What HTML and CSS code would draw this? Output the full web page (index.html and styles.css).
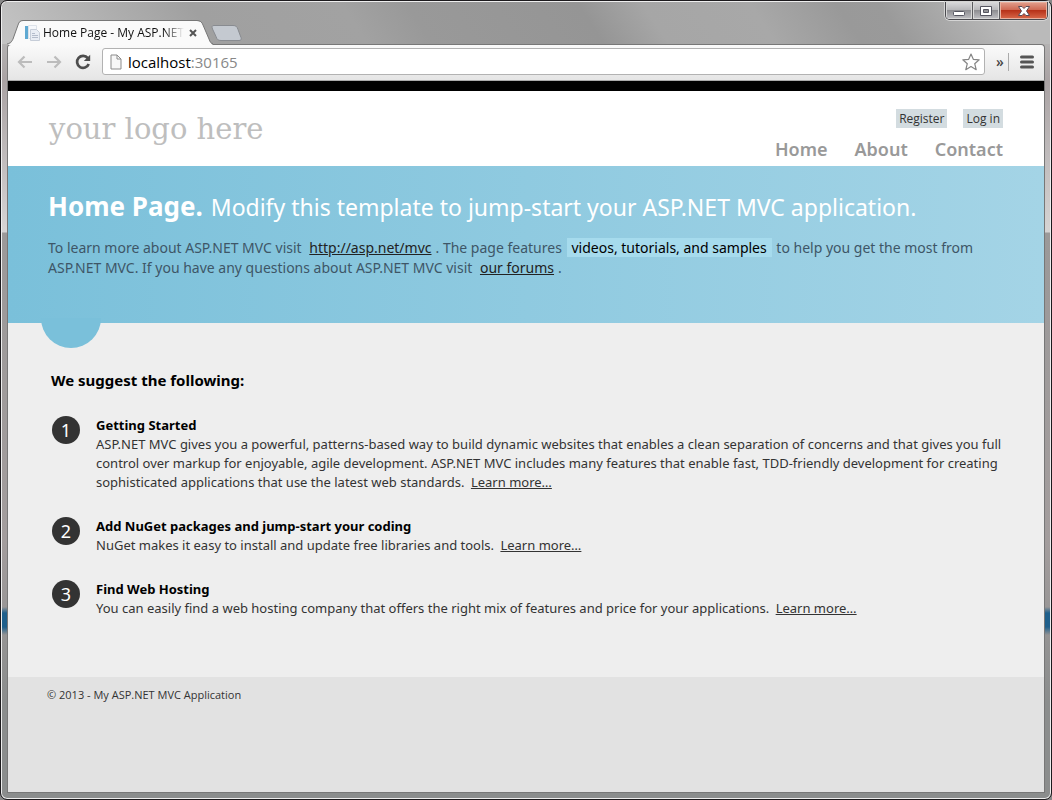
FILE: index.html
```html
<!DOCTYPE html>
<html lang="en">
<head>
<meta charset="utf-8">
<meta name="viewport" content="width=device-width, initial-scale=1">
<title>Home Page - My ASP.NET MVC Application</title>
<link rel="stylesheet" href="styles.css">
</head>
<body>
<div class="window">
  <div class="titlebar">
    <div class="tab">
      <svg class="tab-shape" viewBox="0 0 206 25" aria-hidden="true">
        <path class="tab-fill" d="M0 25 C4 24 5 22 6 19 L11 5 C12 2 13 1 16 1 H190 C193 1 195 2 196 5 L202 19 C203 22 204 24 206 25 Z"/>
        <path class="tab-line" d="M0 24 C4 23 5 21 6 19 L11 5 C12 2 13 .5 16 .5 H190 C193 .5 195 2 196 5 L202 19 C203 22 204 23.500 206 23.500"/>
      </svg>
      <svg class="favicon" viewBox="0 0 16 16" aria-hidden="true">
        <path fill="#f6f8fb" stroke="#dde2e9" d="M4.500 .5h8v13h-8z"/>
        <path fill="#5fa9d2" d="M1 1h3v13H1z"/>
        <path fill="#e9edf4" stroke="#c6cdd8" d="M6.500 4.500h6l3 3v8h-9z"/>
        <path stroke="#b4bccb" d="M8 8.500h3M8 10.500h6M8 12.500h6"/>
      </svg>
      <span class="tab-title">Home Page - My ASP.NET</span>
      <button class="tab-close" aria-label="Close tab">
        <svg viewBox="0 0 8 8"><path d="M1 1l6 6M7 1L1 7" stroke="#555" stroke-width="2"/></svg>
      </button>
    </div>
    <button class="new-tab" aria-label="New tab">
      <svg viewBox="0 0 32 16"><path d="M4 .5H23c3 0 4 1 5 4l3 8c.6 2 0 3-2 3H11c-3 0-4-1-5-4L2.500 4C1.700 1.500 2 .5 4 .5Z" fill="#c4c9d0" stroke="#888b90"/></svg>
    </button>
    <div class="controls">
      <button class="ctl" aria-label="Minimize"><svg viewBox="0 0 14 12"><rect x="1.500" y="6.500" width="11" height="4" rx="1" fill="#fff" stroke="#555560"/></svg></button>
      <button class="ctl" aria-label="Maximize"><svg viewBox="0 0 14 12"><path d="M1.500 1.500h11v9h-11zM4.500 4.500v3h5v-3z" fill="#fff" fill-rule="evenodd" stroke="#555560"/></svg></button>
      <button class="ctl ctl-close" aria-label="Close"><svg viewBox="0 0 14 12"><path d="M1.500 1.500h3.500l2 2 2-2h3.500L9.500 6l3 4.500H9l-2-2-2 2H1.500l3-4.500z" fill="#fff" stroke="#5b4a55"/></svg></button>
    </div>
  </div>

  <div class="toolbar">
    <button class="tool" aria-label="Back"><svg viewBox="0 0 16 16"><path d="M7.500 2.500L2 8l5.500 5.500M2.500 8H15" fill="none" stroke="#bcbcbc" stroke-width="2.200"/></svg></button>
    <button class="tool" aria-label="Forward"><svg viewBox="0 0 16 16"><path d="M8.500 2.500L14 8l-5.500 5.500M1 8h12.500" fill="none" stroke="#bcbcbc" stroke-width="2.200"/></svg></button>
    <button class="tool" aria-label="Reload"><svg viewBox="0 0 16 16"><path d="M12.800 4.200A6 6 0 1 0 13.700 10" fill="none" stroke="#4d4d4d" stroke-width="2.700"/><path d="M15.200.8V7H8.800z" fill="#4d4d4d"/></svg></button>
    <div class="omnibox">
      <svg class="page-icon" viewBox="0 0 12 16" aria-hidden="true"><path d="M1 1h6l4 4v10H1zM7 1v4h4" fill="#f7f7f7" stroke="#8b8b8b"/></svg>
      <div class="address" role="textbox" aria-label="Address">localhost<span class="port">:30165</span></div>
      <button class="star" aria-label="Bookmark this page"><svg viewBox="0 0 18 18"><path d="M9 1l2.300 5.300 5.900.5-4.500 3.900 1.500 6L9 13.500l-5.200 3.200 1.500-6L.8 6.800l5.900-.5z" fill="#fff" stroke="#858585" stroke-width="1.200" stroke-linejoin="round"/></svg></button>
    </div>
    <button class="more" aria-label="More extensions">»</button>
    <button class="menu" aria-label="Menu"><svg viewBox="0 0 14 14"><path d="M1.500 2h11M1.500 7h11M1.500 12h11" stroke="#555" stroke-width="3" stroke-linecap="round"/></svg></button>
  </div>

  <div class="page">
    <header class="site-header">
      <a class="logo" href="#">your logo here</a>
      <div class="header-links">
        <div class="login"><a href="#">Register</a><a href="#">Log in</a></div>
        <nav class="nav"><a href="#">Home</a><a href="#">About</a><a href="#">Contact</a></nav>
      </div>
    </header>

    <section class="featured">
      <div class="headline"><h1>Home Page.</h1> <h2>Modify this template to jump-start your ASP.NET MVC application.</h2></div>
      <p>To learn more about ASP.NET MVC visit <a href="#">http://asp.net/mvc</a>. The page features <mark>videos, tutorials, and samples</mark> to help you get the most from ASP.NET MVC. If you have any questions about ASP.NET MVC visit <a href="#">our forums</a>.</p>
    </section>

    <main class="main">
      <h3>We suggest the following:</h3>
      <ol class="steps">
        <li><h5>Getting Started</h5>ASP.NET MVC gives you a powerful, patterns-based way to build dynamic websites that enables a clean separation of concerns and that gives you full control over markup for enjoyable, agile development. ASP.NET MVC includes many features that enable fast, TDD-friendly development for creating sophisticated applications that use the latest web standards. <a href="#">Learn more…</a></li>
        <li><h5>Add NuGet packages and jump-start your coding</h5>NuGet makes it easy to install and update free libraries and tools. <a href="#">Learn more…</a></li>
        <li><h5>Find Web Hosting</h5>You can easily find a web hosting company that offers the right mix of features and price for your applications. <a href="#">Learn more…</a></li>
      </ol>
    </main>

    <footer class="footer">© 2013 - My ASP.NET MVC Application</footer>
  </div>
</div>
</body>
</html>
```
FILE: styles.css
```css
* { box-sizing: border-box; }

body {
  margin: 0;
  background: #888;
  color: #333;
  font-family: "Open Sans", "Noto Sans", sans-serif;
  font-size: 14px;
}

h1, h2, h3, h5, p { margin: 0; }

button {
  display: flex;
  align-items: center;
  justify-content: center;
  padding: 0;
  border: 0;
  background: none;
}

/* Window frame */
.window {
  display: flex;
  flex-direction: column;
  min-height: 100vh;
  padding: 0 6px 6px;
  border: 1px solid #1c1a1d;
  border-radius: 7px;
  box-shadow: inset 0 0 0 1px #eee;
  background:
    linear-gradient(transparent 606px, #1f5f8b 612px 626px, transparent 634px) 0 0 / 7px 100% no-repeat,
    linear-gradient(transparent 606px, #1f5f8b 612px 626px, transparent 634px) 100% 0 / 7px 100% no-repeat,
    linear-gradient(#b4b2b2 44px, #aaa3a4 80px, #d6d4d4 231px, #9b9999 232px, #a39d9d 540px, #8b8d8d 700px);
}

.titlebar {
  display: flex;
  align-items: flex-end;
  height: 42px;
  margin: 1px -5px 0;
  padding: 0 5px;
  border-radius: 6px 6px 0 0;
  background: linear-gradient(57deg, #c4c4c4 0%, #a0a0a0 20%, #a2a2a2 34%, #999 40%, #959595 56%, #a6a6a6 62%, #a8a8a8 72%, #999 80%, #9a9a9a 84%, #bababa 95%);
}

.tab {
  position: relative;
  display: flex;
  align-items: center;
  width: 206px;
  height: 25px;
  padding: 0 17px;
  margin-bottom: -1px;
}

.tab-shape {
  position: absolute;
  inset: 0;
  width: 100%;
  height: 100%;
}

.tab-fill { fill: #fafafa; }
.tab-line { fill: none; stroke: #777; }

.favicon {
  position: relative;
  flex: none;
  width: 16px;
  height: 16px;
}

.tab-title {
  position: relative;
  flex: 1;
  margin-left: 3px;
  color: #111;
  font-size: 12px;
  white-space: nowrap;
  -webkit-mask-image: linear-gradient(90deg, #000 86%, transparent);
  mask-image: linear-gradient(90deg, #000 86%, transparent);
}

.tab-close {
  position: relative;
  flex: none;
  width: 8px;
  height: 8px;
  margin-left: 5px;
}

.tab-close svg { width: 8px; height: 8px; }

.new-tab { margin: 0 0 3px -3px; }
.new-tab svg { width: 32px; height: 16px; }

.controls {
  display: flex;
  align-self: flex-start;
  margin: 0 -3px 0 auto;
  border: 1px solid #4a4a4f;
  border-top: 0;
  border-radius: 0 0 5px 5px;
  box-shadow: 0 0 0 1px #d5d5d5;
  overflow: hidden;
}

.ctl {
  width: 27px;
  height: 17px;
  border-right: 1px solid #5c5c60;
  background: linear-gradient(#dadadc, #b8b8bb 45%, #8e8e92 50%, #c0c0c4);
  box-shadow: inset 0 0 0 1px #d8d8d8;
}

.ctl-close {
  width: 47px;
  border: 0;
  background: linear-gradient(#e2a08e, #cf6a54 45%, #b73219 50%, #d9694a);
  box-shadow: inset 0 0 0 1px #e9b09e;
}

.ctl svg { width: 14px; height: 12px; }

/* Browser toolbar */
.toolbar {
  display: flex;
  align-items: center;
  height: 37px;
  padding: 0 10px 2px 9px;
  border: 1px solid #777;
  border-bottom-color: #aaa;
  border-radius: 4px 4px 0 0;
  background: linear-gradient(#fafafa, #e5e5e5);
}

.tool {
  width: 16px;
  margin-right: 13px;
}

.tool svg { width: 16px; height: 16px; }
.tool:nth-child(3) { margin-right: 11px; }

.omnibox {
  display: flex;
  flex: 1;
  align-items: center;
  height: 27px;
  padding: 0 4px 0 7px;
  border: 1px solid #b2b2b2;
  border-radius: 3px;
  background: #fff;
}

.page-icon {
  width: 12px;
  height: 16px;
}

.address {
  flex: 1;
  margin-left: 6px;
  color: #000;
  font-size: 15px;
}

.port { color: #888; }
.star svg { width: 18px; height: 18px; }

.more {
  width: 24px;
  height: 18px;
  padding-left: 7px;
  border-right: 1px solid #aaa;
  color: #444;
  font: 600 14px "Open Sans", sans-serif;
}

.menu { margin-left: 11px; }
.menu svg { width: 14px; height: 14px; }

/* Page */
.page {
  display: flex;
  flex: 1;
  flex-direction: column;
  border: solid #777;
  border-width: 0 1px 1px;
  background: #e2e2e2;
}

.site-header {
  display: flex;
  justify-content: space-between;
  padding: 18px 41px 4px 41px;
  border-top: 10px solid #000;
  background: #fff;
}

.logo {
  margin-top: 2px;
  color: #bebebe;
  font: 29px/36px "DejaVu Serif", serif;
  text-decoration: none;
}

.login {
  display: flex;
  justify-content: flex-end;
  gap: 16px;
}

.login a {
  padding: 0 3px;
  background: #d3dce0;
  color: #333;
  font-size: 12px;
  line-height: 19px;
  text-decoration: none;
}

.nav {
  display: flex;
  justify-content: flex-end;
  gap: 27px;
  margin-top: 8px;
}

.nav a {
  color: #999;
  font-family: "Noto Sans", sans-serif;
  font-size: 18px;
  font-weight: 600;
  line-height: 26px;
  text-decoration: none;
}

.featured {
  position: relative;
  padding: 22px 40px 45px;
  background: linear-gradient(90deg, #7ac0da, #a4d4e6);
  color: #3e5667;
  font-family: "Noto Sans", sans-serif;
}

.featured::after {
  position: absolute;
  top: calc(100% - 5px);
  left: 33px;
  width: 60px;
  height: 30px;
  border-radius: 0 0 30px 30px;
  background: #7ac0da;
  content: "";
}

.headline {
  display: flex;
  flex-wrap: wrap;
  align-items: baseline;
  column-gap: 8px;
  color: #fff;
  line-height: 36px;
}

.headline h1 { font-size: 26px; }

.headline h2 {
  font-size: 23px;
  font-weight: 400;
}

.featured p {
  margin-top: 13px;
  font-size: 14px;
  line-height: 20px;
}

.featured a {
  margin: 0 4px;
  color: #222;
}

.featured mark {
  margin: 0 1px;
  padding: 0 5px;
  background: #a6dbed;
  color: #000;
}

.main {
  padding: 45px 32px 59px 43px;
  background: #eee;
  font-family: "Noto Sans", sans-serif;
}

.main h3 {
  color: #000;
  font-size: 15px;
  line-height: 24px;
}

.steps {
  margin: 24px 0 0;
  padding: 0;
  list-style: none;
  counter-reset: step;
}

.steps li {
  position: relative;
  padding-left: 45px;
  margin-bottom: 25px;
  font-size: 13px;
  line-height: 19px;
  counter-increment: step;
}

.steps li:last-child { margin-bottom: 0; }

.steps li::before {
  position: absolute;
  top: 0;
  left: 1px;
  width: 28px;
  height: 28px;
  border-radius: 50%;
  background: #333;
  color: #fff;
  font-size: 18px;
  line-height: 28px;
  text-align: center;
  content: counter(step);
}

.steps h5 {
  color: #000;
  font-size: 13px;
}

.steps a {
  margin-left: 3px;
  color: #333;
}

.footer {
  padding: 9px 39px;
  color: #333;
  font-size: 11px;
  line-height: 18px;
}
```
